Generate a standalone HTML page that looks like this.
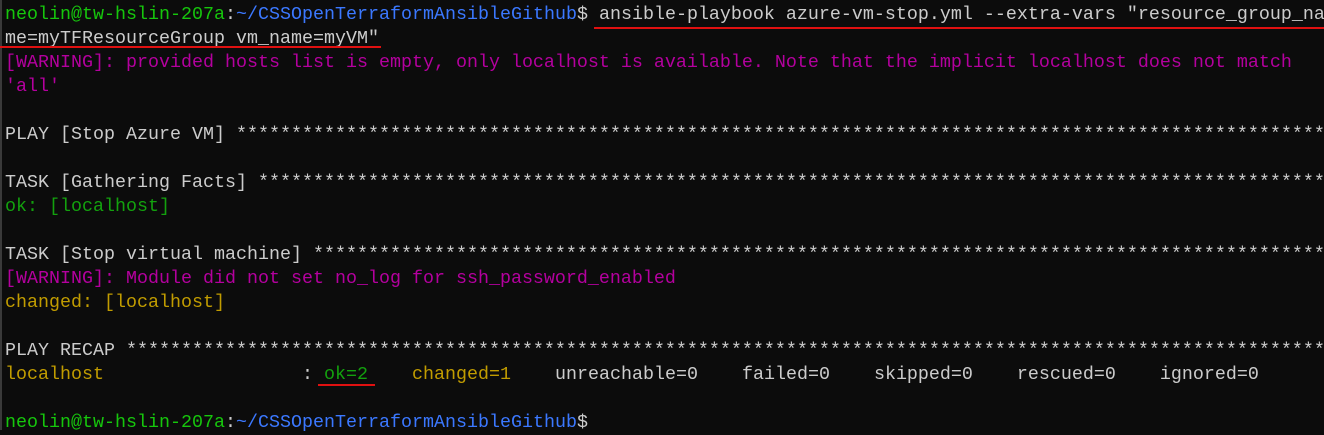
<!DOCTYPE html>
<html><head><meta charset="utf-8"><style>
html,body{margin:0;padding:0;background:#0c0c0c;width:1324px;height:430px;overflow:hidden;}
#t{position:absolute;left:5px;top:3px;font-family:"Liberation Mono",monospace;font-size:18.33px;line-height:24px;color:#cccccc;white-space:pre;}
.g{color:#16c60c}.gd{color:#13a10e}.b{color:#3b78ff}.m{color:#b4009e}.y{color:#c19c00}
.u{position:absolute;height:2px;background:#e01010;}
.edge{position:absolute;left:0;top:0;width:2px;height:430px;background:#3a3a3a;}
</style></head><body>
<div class="edge"></div>
<div id="t"><span class="g">neolin@tw-hslin-207a</span>:<span class="b">~/CSSOpenTerraformAnsibleGithub</span>$ ansible-playbook azure-vm-stop.yml --extra-vars "resource_group_na
me=myTFResourceGroup vm_name=myVM"
<span class="m">[WARNING]: provided hosts list is empty, only localhost is available. Note that the implicit localhost does not match
'all'</span>

PLAY [Stop Azure VM] ****************************************************************************************************

TASK [Gathering Facts] **************************************************************************************************
<span class="gd">ok: [localhost]</span>

TASK [Stop virtual machine] *********************************************************************************************
<span class="m">[WARNING]: Module did not set no_log for ssh_password_enabled</span>
<span class="y">changed: [localhost]</span>

PLAY RECAP **************************************************************************************************************
<span class="y">localhost</span>                  : <span class="gd">ok=2</span>    <span class="y">changed=1</span>    unreachable=0    failed=0    skipped=0    rescued=0    ignored=0

<span class="g">neolin@tw-hslin-207a</span>:<span class="b">~/CSSOpenTerraformAnsibleGithub</span>$</div>
<div class="u" style="left:594px;top:27px;width:730px;"></div>
<div class="u" style="left:0;top:46px;width:381px;"></div>
<div class="u" style="left:318px;top:384px;width:57px;"></div>
</body></html>
